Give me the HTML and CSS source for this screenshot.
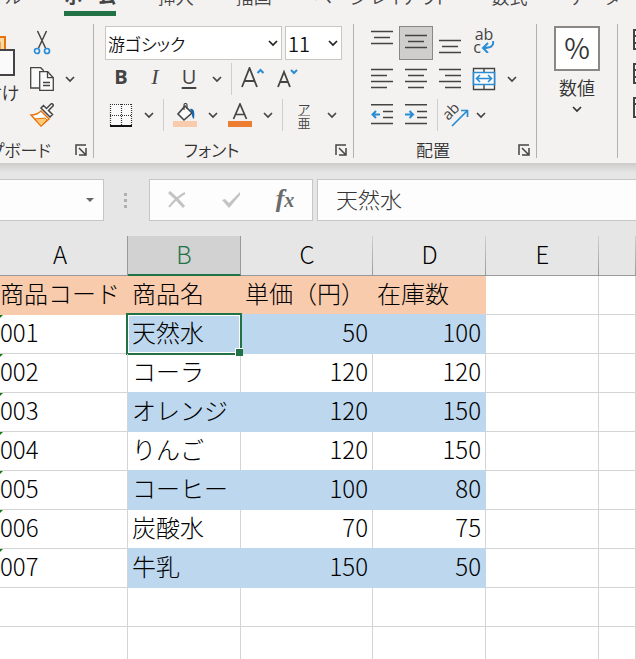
FILE: index.html
```html
<!DOCTYPE html>
<html lang="ja">
<head>
    <meta charset="UTF-8">
    <meta name="viewport" content="width=device-width, initial-scale=1.0">
    <title>商品一覧</title>
    <link rel="stylesheet" href="styles.css">
</head>
<body>
    <!-- Shared icons -->
    <svg class="icon-defs" aria-hidden="true">
        <symbol id="chevron" viewBox="0 0 10 10"><path d="M1 3l4 4 4-4" fill="none" stroke="currentColor" stroke-width="1.700"/></symbol>
        <symbol id="launcher" viewBox="0 0 12 12"><path d="M1 11V1h10M4 4l6 6M11 4v7H4" fill="none" stroke="#444" stroke-width="1.500"/></symbol>
    </svg>

    <header class="ribbon">
        <nav class="tabs">
            <a href="#">ファイル</a>
            <a href="#" class="active">ホーム</a>
            <a href="#">挿入</a>
            <a href="#">描画</a>
            <a href="#">ページ レイアウト</a>
            <a href="#">数式</a>
            <a href="#">データ</a>
        </nav>

        <div class="groups">
            <!-- Clipboard -->
            <section class="group clipboard">
                <div class="clipboard-body">
                    <button class="paste">
                        <svg width="60" height="44" viewBox="0 0 60 44" fill="none">
                            <path d="M10 3h40v38H10z" fill="#fbd9a2" stroke="#e8740c" stroke-width="2"/>
                            <path d="M16 8h29v28H16z" fill="#fafafa" stroke="#e8740c"/>
                            <path d="M26 16h33v25H26z" fill="#fafafa" stroke="#444" stroke-width="2"/>
                        </svg>
                        <span>貼り付け</span>
                    </button>
                    <div class="rows">
                        <div class="row">
                            <button class="tool" aria-label="切り取り">
                                <svg width="24" height="26" viewBox="0 0 24 26" fill="none">
                                    <path d="M7.500 1l8 17M16.500 1l-8 17" stroke="#444" stroke-width="1.500"/>
                                    <circle cx="7" cy="21" r="2.500" stroke="#2a8dd4" stroke-width="1.700"/>
                                    <circle cx="17" cy="21" r="2.500" stroke="#2a8dd4" stroke-width="1.700"/>
                                </svg>
                            </button>
                        </div>
                        <div class="row">
                            <button class="tool" aria-label="コピー">
                                <svg width="24" height="24" viewBox="0 0 24 24" fill="#fafafa" stroke="#444" stroke-width="1.300">
                                    <path d="M9.500 21H.700V.700h10l3 3"/>
                                    <path d="M9.700 4.700h8l5.600 6v12.600H9.700z"/>
                                    <path d="M17.500 4.700v6h5.800M13 15.500h7M13 18.500h7" fill="none"/>
                                </svg>
                            </button>
                            <button class="drop" aria-label="コピーのオプション"><svg><use href="#chevron"/></svg></button>
                        </div>
                        <div class="row">
                            <button class="tool" aria-label="書式のコピー">
                                <svg width="24" height="24" viewBox="0 0 24 24">
                                    <path d="M1 12c4 0 7-1 10-4l8 8-8 7z" fill="#fff" stroke="#e8740c" stroke-width="1.500"/>
                                    <path d="M5 16l10-1 2 2-6 6z" fill="#fbc978" stroke="#e8740c"/>
                                    <path d="M11 5l9 9 2.500-2.500-4-4L23 3c1-1-1-3-2-2l-4.500 4.500-3-3z" fill="#fafafa" stroke="#444" stroke-width="1.500"/>
                                </svg>
                            </button>
                        </div>
                    </div>
                </div>
                <div class="group-footer">
                    <span>クリップボード</span>
                    <button class="launcher" aria-label="クリップボードの設定"><svg><use href="#launcher"/></svg></button>
                </div>
            </section>

            <!-- Font -->
            <section class="group font">
                <div class="rows">
                    <div class="row selects">
                        <label class="combo font-name">
                            <select aria-label="フォント名"><option>游ゴシック</option></select>
                            <svg><use href="#chevron"/></svg>
                        </label>
                        <label class="combo font-size">
                            <select aria-label="フォント サイズ"><option>11</option></select>
                            <svg><use href="#chevron"/></svg>
                        </label>
                    </div>
                    <div class="row">
                        <button class="tool bold">B</button>
                        <button class="tool italic">I</button>
                        <button class="tool underline">U</button>
                        <button class="drop" aria-label="下線のオプション"><svg><use href="#chevron"/></svg></button>
                        <span class="divider"></span>
                        <button class="tool" aria-label="フォント サイズの拡大">
                            <svg width="24" height="24" viewBox="0 0 24 24" fill="none">
                                <path d="M1 20L8.500 1 16 20M3.500 14h10" stroke="#444" stroke-width="1.800"/>
                                <path d="M16.500 6l3-3 3 3" stroke="#2a8dd4" stroke-width="2"/>
                            </svg>
                        </button>
                        <button class="tool" aria-label="フォント サイズの縮小">
                            <svg width="24" height="24" viewBox="0 0 24 24" fill="none">
                                <path d="M3 20L9 5l6 15M5 15h8" stroke="#444" stroke-width="1.800"/>
                                <path d="M16 3l3 3 3-3" stroke="#2a8dd4" stroke-width="2"/>
                            </svg>
                        </button>
                    </div>
                    <div class="row">
                        <button class="tool" aria-label="罫線">
                            <svg width="24" height="24" viewBox="0 0 24 24">
                                <path d="M1 1h22v22H1z" fill="#fafafa"/>
                                <path d="M1 1.500h22M1 12.500h22M1.500 1v21M12.500 1v21M22.500 1v21" stroke="#333" stroke-dasharray="1 1" stroke-width="1.200"/>
                                <path d="M1 23h22" stroke="#111" stroke-width="2"/>
                            </svg>
                        </button>
                        <button class="drop" aria-label="罫線のオプション"><svg><use href="#chevron"/></svg></button>
                        <span class="divider"></span>
                        <button class="tool" aria-label="塗りつぶしの色">
                            <svg width="24" height="24" viewBox="0 0 24 24" fill="none">
                                <path d="M12 3l7 7-8 7-6-6z" fill="#fafafa" stroke="#444" stroke-width="1.600"/>
                                <path d="M11 7V2c0-2 3-2 3 0v4" stroke="#444" stroke-width="1.200"/>
                                <path d="M17 6c4-1 5 3 4 10-2-1-2-4-2-6z" fill="#1166ad"/>
                                <path d="M0 18h24v6H0z" fill="#f8cbad"/>
                            </svg>
                        </button>
                        <button class="drop" aria-label="塗りつぶしのオプション"><svg><use href="#chevron"/></svg></button>
                        <button class="tool" aria-label="フォントの色">
                            <svg width="24" height="24" viewBox="0 0 24 24" fill="none">
                                <path d="M5.500 16L12 1l6.500 15M7.500 11.500h9" stroke="#444" stroke-width="1.700"/>
                                <path d="M0 18h24v6H0z" fill="#ed7d31"/>
                            </svg>
                        </button>
                        <button class="drop" aria-label="フォントの色のオプション"><svg><use href="#chevron"/></svg></button>
                        <span class="divider"></span>
                        <button class="tool ruby"><span>ア</span><span>亜</span></button>
                        <button class="drop" aria-label="ふりがなのオプション"><svg><use href="#chevron"/></svg></button>
                    </div>
                </div>
                <div class="group-footer">
                    <span>フォント</span>
                    <button class="launcher" aria-label="フォントの設定"><svg><use href="#launcher"/></svg></button>
                </div>
            </section>

            <!-- Alignment -->
            <section class="group align">
                <div class="rows">
                    <div class="row">
                        <button class="tool" aria-label="上揃え">
                            <svg width="22" height="26" viewBox="0 0 22 26"><path d="M0 1.500h22M3 7.500h16M0 13.500h22" stroke="#444" stroke-width="1.500"/></svg>
                        </button>
                        <button class="tool pressed" aria-label="上下中央揃え">
                            <svg width="22" height="26" viewBox="0 0 22 26"><path d="M0 5.500h22M3 11.500h16M0 17.500h22" stroke="#444" stroke-width="1.500"/></svg>
                        </button>
                        <button class="tool" aria-label="下揃え">
                            <svg width="22" height="26" viewBox="0 0 22 26"><path d="M0 10.500h22M3 16.500h16M0 22.500h22" stroke="#444" stroke-width="1.500"/></svg>
                        </button>
                        <button class="tool wrap">
                            <span>ab</span>
                            <span>c<svg width="14" height="12" viewBox="0 0 14 12" fill="none" stroke="#2a8dd4" stroke-width="2"><path d="M12 0c1 5-2 7-10 7M7 2L2 7l5 5"/></svg></span>
                        </button>
                    </div>
                    <div class="row">
                        <button class="tool" aria-label="左揃え">
                            <svg width="22" height="22" viewBox="0 0 22 22"><path d="M0 1.500h22M0 7.500h16M0 13.500h22M0 19.500h16" stroke="#444" stroke-width="1.500"/></svg>
                        </button>
                        <button class="tool" aria-label="中央揃え">
                            <svg width="22" height="22" viewBox="0 0 22 22"><path d="M0 1.500h22M3 7.500h16M0 13.500h22M3 19.500h16" stroke="#444" stroke-width="1.500"/></svg>
                        </button>
                        <button class="tool" aria-label="右揃え">
                            <svg width="22" height="22" viewBox="0 0 22 22"><path d="M0 1.500h22M6 7.500h16M0 13.500h22M6 19.500h16" stroke="#444" stroke-width="1.500"/></svg>
                        </button>
                        <button class="tool" aria-label="セルを結合して中央揃え">
                            <svg width="24" height="24" viewBox="0 0 24 24" fill="#fafafa">
                                <path d="M1.500 1.500h21v21h-21zM12 1v22" stroke="#444" stroke-width="1.400"/>
                                <path d="M1.500 5.500h21v12h-21z" stroke="#2a8dd4" stroke-width="1.600"/>
                                <path d="M5 11.500h14M8 8l-3.500 3.500L8 15M16 8l3.500 3.500L16 15" fill="none" stroke="#2a8dd4" stroke-width="1.600"/>
                            </svg>
                        </button>
                        <button class="drop" aria-label="結合のオプション"><svg><use href="#chevron"/></svg></button>
                    </div>
                    <div class="row">
                        <button class="tool" aria-label="インデントを減らす">
                            <svg width="22" height="22" viewBox="0 0 22 22" fill="none">
                                <path d="M0 .700h22M12 7.500h10M12 13.500h10M0 19.500h22" stroke="#444" stroke-width="1.500"/>
                                <path d="M9 10.500H1M5 7l-3.500 3.500L5 14" stroke="#2a8dd4" stroke-width="2"/>
                            </svg>
                        </button>
                        <button class="tool" aria-label="インデントを増やす">
                            <svg width="22" height="22" viewBox="0 0 22 22" fill="none">
                                <path d="M0 .700h22M12 7.500h10M12 13.500h10M0 19.500h22" stroke="#444" stroke-width="1.500"/>
                                <path d="M0 10.500h8M4.500 7L8 10.500 4.500 14" stroke="#2a8dd4" stroke-width="2"/>
                            </svg>
                        </button>
                        <span class="divider"></span>
                        <button class="tool narrow" aria-label="方向">
                            <svg width="26" height="26" viewBox="0 0 26 26" fill="none">
                                <text x="1" y="15" transform="rotate(-45 8 12)" class="rotated">ab</text>
                                <path d="M9 24L24 9M18 8.500h6.500V15" stroke="#2a8dd4" stroke-width="1.700"/>
                            </svg>
                        </button>
                        <button class="drop" aria-label="方向のオプション"><svg><use href="#chevron"/></svg></button>
                    </div>
                </div>
                <div class="group-footer">
                    <span>配置</span>
                    <button class="launcher" aria-label="配置の設定"><svg><use href="#launcher"/></svg></button>
                </div>
            </section>

            <!-- Number -->
            <section class="group number">
                <button class="number-btn">
                    <span class="percent">%</span>
                    <span>数値</span>
                    <svg class="number-arrow"><use href="#chevron"/></svg>
                </button>
            </section>

            <!-- Styles -->
            <section class="group styles">
                <svg width="20" height="90" viewBox="0 0 20 90" fill="#fafafa" stroke="#444" stroke-width="2">
                    <path d="M1 1h18v19H1zM1 7h18M1 14h18M1 35h18v19H1zM1 41h18M1 48h18M1 69h18v19H1zM1 75h18"/>
                </svg>
            </section>
        </div>
    </header>

    <!-- Formula bar -->
    <div class="formula-bar">
        <div class="name-box">
            <input type="text" aria-label="名前ボックス">
            <svg width="8" height="4" viewBox="0 0 8 4"><path d="M0 0h8L4 4z" fill="#666"/></svg>
        </div>
        <span class="grip"><i></i><i></i><i></i></span>
        <div class="formula-actions">
            <button aria-label="キャンセル">
                <svg width="20" height="18" viewBox="0 0 20 18" fill="none" stroke="#c3c3c3"><path d="M2 1c5 4 10 9 15 15" stroke-width="3"/><path d="M18 2C12 5 6 11 2 16" stroke-width="2"/></svg>
            </button>
            <button aria-label="入力">
                <svg width="20" height="18" viewBox="0 0 20 18"><path d="M1 9l3-1 4 4L19 1v3L8 17z" fill="#c3c3c3"/></svg>
            </button>
            <button class="fx"><span>f</span>x</button>
        </div>
        <input class="formula-input" type="text" value="天然水" aria-label="数式バー">
    </div>

    <!-- Sheet -->
    <table class="sheet">
        <colgroup>
            <col class="col-a">
            <col class="col-m">
            <col class="col-c">
            <col class="col-m">
            <col class="col-m">
            <col>
        </colgroup>
        <thead>
            <tr><th>A</th><th class="current">B</th><th>C</th><th>D</th><th>E</th><th></th></tr>
        </thead>
        <tbody>
            <tr class="title"><td>商品コード</td><td>商品名</td><td>単価（円）</td><td>在庫数</td><td></td><td></td></tr>
            <tr class="band"><td class="code">001</td><td class="selected">天然水</td><td class="num">50</td><td class="num">100</td><td></td><td></td></tr>
            <tr><td class="code">002</td><td>コーラ</td><td class="num">120</td><td class="num">120</td><td></td><td></td></tr>
            <tr class="band"><td class="code">003</td><td>オレンジ</td><td class="num">120</td><td class="num">150</td><td></td><td></td></tr>
            <tr><td class="code">004</td><td>りんご</td><td class="num">120</td><td class="num">150</td><td></td><td></td></tr>
            <tr class="band"><td class="code">005</td><td>コーヒー</td><td class="num">100</td><td class="num">80</td><td></td><td></td></tr>
            <tr><td class="code">006</td><td>炭酸水</td><td class="num">70</td><td class="num">75</td><td></td><td></td></tr>
            <tr class="band"><td class="code">007</td><td>牛乳</td><td class="num">150</td><td class="num">50</td><td></td><td></td></tr>
            <tr><td></td><td></td><td></td><td></td><td></td><td></td></tr>
            <tr><td></td><td></td><td></td><td></td><td></td><td></td></tr>
        </tbody>
    </table>
</body>
</html>
```
FILE: styles.css
```css
* {
    box-sizing: border-box;
}

body {
    margin: 0;
    height: 100vh;
    overflow: hidden;
    background-color: #fff;
    font-family: "Noto Sans CJK JP", sans-serif;
    font-weight: 300;
    color: #333;
}

button,
input,
select {
    margin: 0;
    padding: 0;
    border: none;
    background: none;
    font: inherit;
    color: inherit;
}

.icon-defs {
    display: none;
}

/* Ribbon */
.ribbon {
    background-color: #f3f2f1;
    border-bottom: 2px solid #d0cecc;
    overflow: hidden;
    font-size: 18px;
    font-weight: 350;
    font-feature-settings: "palt";
}

.tabs {
    display: flex;
    gap: 42px;
    height: 42px;
    margin: -18px 0 0 -40px;
    white-space: nowrap;
}

.tabs a {
    height: 34px;
    line-height: 28px;
    color: #444;
    text-decoration: none;
}

.tabs .active {
    font-weight: 700;
    border-bottom: 5px solid #217346;
}

.groups {
    display: flex;
    padding-bottom: 5px;
}

.group {
    display: flex;
    flex: none;
    flex-direction: column;
    justify-content: space-between;
    height: 134px;
    padding-top: 2px;
    border-right: 1px solid #b3b0ad;
}

.clipboard {
    width: 166px;
    margin-left: -72px;
}

.font {
    width: 260px;
}

.font .rows {
    padding-left: 10px;
}

.align {
    width: 183px;
}

.align .rows {
    padding-left: 11px;
}

.number {
    width: 81px;
}

.styles {
    flex: 1;
    justify-content: flex-start;
    border-right: none;
    padding: 5px 0 0 15px;
}

.clipboard-body {
    display: flex;
    padding-left: 17px;
}

.paste {
    display: flex;
    flex-direction: column;
    align-items: center;
    width: 80px;
    padding-top: 8px;
    line-height: 28px;
    white-space: nowrap;
}

.rows {
    display: flex;
    flex-direction: column;
    gap: 2px;
}

.row {
    display: flex;
    height: 34px;
}

.tool,
.drop {
    display: flex;
    flex: none;
    align-items: center;
    justify-content: center;
    width: 34px;
    color: #444;
}

.drop {
    width: 21px;
}

.narrow {
    width: 28px;
}

.drop svg,
.combo svg,
.number-arrow {
    width: 10px;
    height: 10px;
}

.divider {
    width: 1px;
    margin: 1px 4px;
    background-color: #d0cecc;
}

.pressed {
    background-color: #d0cecc;
    border: 1px solid #8a8886;
}

.bold,
.italic,
.underline {
    font-family: "Open Sans", sans-serif;
    font-weight: 400;
    font-size: 20px;
    line-height: 24px;
    padding-bottom: 4px;
}

.bold {
    font-weight: 700;
}

.italic {
    font-family: "Liberation Serif", serif;
    font-style: italic;
    font-size: 22px;
}

.underline {
    text-decoration: underline;
    text-underline-offset: 3px;
}

.ruby,
.wrap {
    flex-direction: column;
    font-size: 13px;
    line-height: 13px;
}

.ruby span:first-child {
    border-bottom: 1px solid #999;
}

.wrap {
    padding-bottom: 4px;
    font-family: "Open Sans", sans-serif;
    font-weight: 400;
    font-size: 16px;
}

.rotated {
    font-family: "Open Sans", sans-serif;
    font-weight: 400;
    font-size: 15px;
    fill: #444;
}

.selects {
    gap: 3px;
    padding-left: 1px;
}

.combo {
    display: flex;
    align-items: center;
    padding-right: 3px;
    background-color: #fff;
    border: 1px solid #c8c6c4;
    color: #222;
}

.combo select {
    flex: 1;
    min-width: 0;
    appearance: none;
    padding-left: 2px;
    font-size: 17px;
    color: #111;
}

.font-name {
    width: 177px;
}

.font-size {
    width: 57px;
}

.font-size select {
    font-size: 20px;
}

.group-footer {
    display: flex;
    align-items: center;
    height: 16px;
    font-size: 17px;
    line-height: 16px;
    white-space: nowrap;
}

.group-footer span {
    flex: 1;
    text-align: center;
}

.launcher {
    display: flex;
    justify-content: center;
    width: 24px;
}

.launcher svg {
    width: 12px;
    height: 12px;
}

.number-btn {
    display: flex;
    flex-direction: column;
    align-items: center;
    line-height: 33px;
}

.percent {
    width: 46px;
    height: 45px;
    border: 2px solid #8a8886;
    background-color: #fff;
    font-size: 28px;
    line-height: 38px;
}

/* Formula bar */
.formula-bar {
    display: flex;
    height: 71px;
    padding: 14px 0 15px;
    background: linear-gradient(#d2d2d2, #e6e6e6 8px);
}

.name-box {
    display: flex;
    align-items: center;
    width: 104px;
    padding-right: 9px;
    background-color: #fdfdfd;
    border: 1px solid #c6c6c6;
    border-left: none;
}

.name-box input {
    flex: 1;
    min-width: 0;
}

.grip {
    display: flex;
    flex-direction: column;
    justify-content: center;
    gap: 3px;
    width: 45px;
    padding-left: 20px;
}

.grip i {
    width: 3px;
    height: 3px;
    background-color: #b0b0b0;
}

.formula-actions {
    display: flex;
    width: 164px;
    margin-right: 4px;
    background-color: #fdfdfd;
    border: 1px solid #c6c6c6;
}

.formula-actions button {
    display: flex;
    flex: 1;
    align-items: center;
    justify-content: center;
}

.formula-actions .fx {
    align-items: baseline;
    padding-top: 4px;
    font-family: "Liberation Serif", serif;
    font-style: italic;
    font-weight: 700;
    font-size: 20px;
    color: #6b6b6b;
}

.fx span {
    font-size: 26px;
}

.formula-input {
    flex: 1;
    min-width: 0;
    padding: 0 0 4px 18px;
    background-color: #fdfdfd;
    border: 1px solid #c6c6c6;
    border-right: none;
    font-size: 22px;
}

/* Sheet */
.sheet {
    width: 100%;
    table-layout: fixed;
    border-collapse: separate;
    border-spacing: 0;
    font-size: 24px;
    line-height: 34px;
    color: #000;
}

.col-a {
    width: 128px;
}

.col-m {
    width: 113px;
}

.col-c {
    width: 132px;
}

.sheet th {
    height: 40px;
    padding: 0 0 3px;
    font-weight: 300;
    background: linear-gradient(#d0d0d0, #999) right / 1px 100% no-repeat #e6e6e6;
    border-bottom: 1px solid #999;
}

.sheet th:first-child {
    padding-right: 8px;
}

.sheet .current {
    background: #d2d2d2;
    border-right: 1px solid #999;
    border-bottom: 2px solid #217346;
    box-shadow: -1px 0 0 #999;
    color: #217346;
}

.sheet td {
    height: 39px;
    padding: 0 4px 4px;
    border-right: 1px solid #d4d4d4;
    border-bottom: 1px solid #d4d4d4;
    white-space: nowrap;
}

.sheet td:first-child {
    position: relative;
    padding-left: 0;
    padding-right: 0;
}

.sheet .num {
    text-align: right;
}

.title td:nth-child(-n+4) {
    background-color: #f8cbad;
    border-color: #f8cbad;
}

.band td:nth-child(n+2):nth-child(-n+4) {
    background-color: #bdd7ee;
    border-color: #bdd7ee;
    box-shadow: -1px -1px 0 #bdd7ee;
}

/* Number stored as text marker */
.code::before {
    content: "";
    position: absolute;
    top: 0;
    left: 0;
    border-top: 3px solid #107c10;
    border-right: 3px solid transparent;
}

.selected {
    position: relative;
}

.selected::before {
    content: "";
    position: absolute;
    inset: -2px;
    border: 2px solid #217346;
    box-shadow: inset 0 0 0 1px #fff;
}

.selected::after {
    content: "";
    position: absolute;
    right: -3px;
    bottom: -3px;
    width: 7px;
    height: 7px;
    background-color: #217346;
    border: solid #fff;
    border-width: 1px 0 0 1px;
}
```
